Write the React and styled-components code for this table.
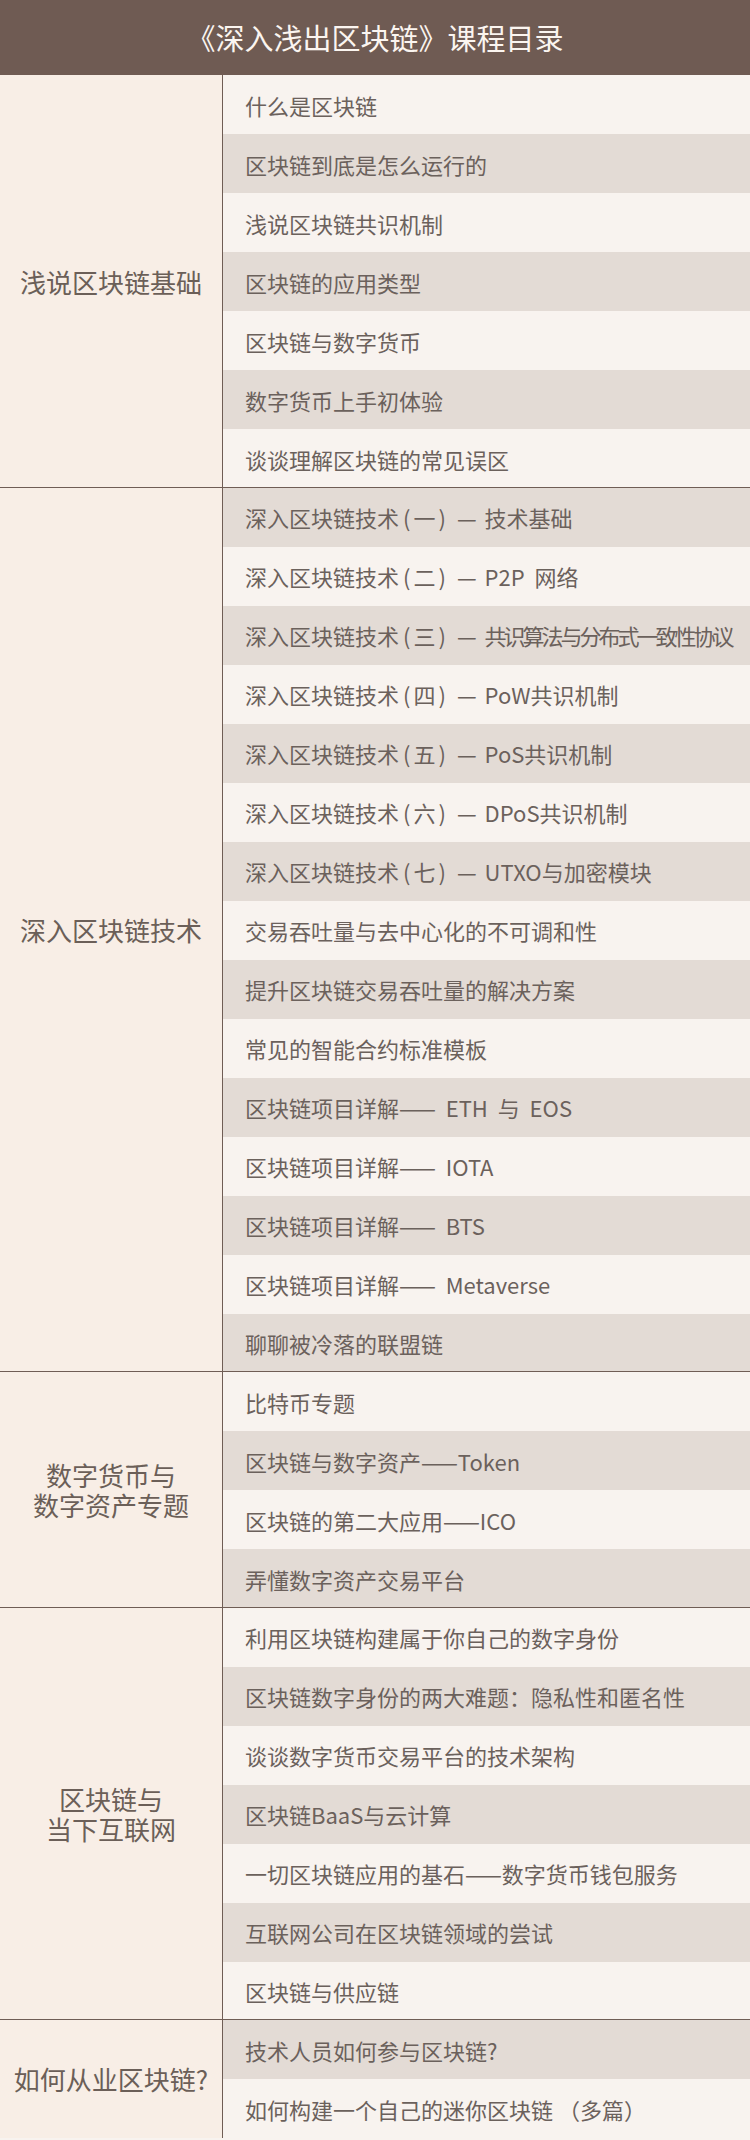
import React from "react";
import styled, { createGlobalStyle } from "styled-components";

const GlobalStyle = createGlobalStyle`
  html, body { margin: 0; padding: 0; background: #f8f3ef; }
  body { font-family: "Noto Sans CJK SC", "Noto Sans", sans-serif; }
  * { box-sizing: border-box; }
`;

const Page = styled.div`
  width: 750px;
  display: flex;
  flex-direction: column;
`;

const Header = styled.header`
  height: 75px;
  background: #6f5b53;
  color: #fbf5f0;
  font-size: 29px;
  display: flex;
  align-items: center;
  justify-content: center;
  padding-bottom: 2px;
`;

const Group = styled.section`
  display: grid;
  grid-template-columns: 223px 1fr;
  border-top: ${(p) => (p.$first ? "none" : "1.5px solid #6f5d55")};
  margin-top: ${(p) => (p.$first ? "0" : "-1.5px")};
  position: relative;
`;

const Label = styled.div`
  background: #f8eee6;
  border-right: 1.5px solid #6f5d55;
  color: #6b5f58;
  font-size: 26px;
  line-height: 30px;
  display: flex;
  align-items: center;
  justify-content: center;
  text-align: center;
  white-space: pre-line;
`;

const Items = styled.div`
  display: flex;
  flex-direction: column;
`;

const Item = styled.div`
  height: 59px;
  display: flex;
  align-items: center;
  padding-left: 22px;
  background: ${(p) => (p.$shaded ? "#e3dbd5" : "#f8f3ef")};
  color: #6b615c;
  font-size: 22px;
  white-space: pre;
  overflow: hidden;
`;

const Ord = styled.span`
  letter-spacing: 3px;
  margin: 0 8px 0 4px;
`;

const Dash = styled.span`
  margin-right: 8px;
`;

const Tail = styled.span`
  letter-spacing: ${(p) => (p.$tight ? "-3px" : "0")};
`;

const tech = (ord, tail, tight) => ({ ord, tail, tight });

const groups = [
  {
    label: "浅说区块链基础",
    items: [
      "什么是区块链",
      "区块链到底是怎么运行的",
      "浅说区块链共识机制",
      "区块链的应用类型",
      "区块链与数字货币",
      "数字货币上手初体验",
      "谈谈理解区块链的常见误区",
    ],
  },
  {
    label: "深入区块链技术",
    items: [
      tech("一", "技术基础"),
      tech("二", "P2P  网络"),
      tech("三", "共识算法与分布式一致性协议", true),
      tech("四", "PoW共识机制"),
      tech("五", "PoS共识机制"),
      tech("六", "DPoS共识机制"),
      tech("七", "UTXO与加密模块"),
      "交易吞吐量与去中心化的不可调和性",
      "提升区块链交易吞吐量的解决方案",
      "常见的智能合约标准模板",
      "区块链项目详解——  ETH  与  EOS",
      "区块链项目详解——  IOTA",
      "区块链项目详解——  BTS",
      "区块链项目详解——  Metaverse",
      "聊聊被冷落的联盟链",
    ],
  },
  {
    label: "数字货币与\n数字资产专题",
    items: [
      "比特币专题",
      "区块链与数字资产——Token",
      "区块链的第二大应用——ICO",
      "弄懂数字资产交易平台",
    ],
  },
  {
    label: "区块链与\n当下互联网",
    items: [
      "利用区块链构建属于你自己的数字身份",
      "区块链数字身份的两大难题：隐私性和匿名性",
      "谈谈数字货币交易平台的技术架构",
      "区块链BaaS与云计算",
      "一切区块链应用的基石——数字货币钱包服务",
      "互联网公司在区块链领域的尝试",
      "区块链与供应链",
    ],
  },
  {
    label: "如何从业区块链?",
    items: ["技术人员如何参与区块链?", "如何构建一个自己的迷你区块链 （多篇）"],
  },
];

export default function App() {
  let index = 0;
  return (
    <Page>
      <GlobalStyle />
      <Header>《深入浅出区块链》课程目录</Header>
      {groups.map((g, gi) => (
        <Group key={gi} $first={gi === 0}>
          <Label>{g.label}</Label>
          <Items>
            {g.items.map((t, ti) => {
              const shaded = index % 2 === 1;
              index += 1;
              if (typeof t === "string") {
                return (
                  <Item key={ti} $shaded={shaded}>
                    {t}
                  </Item>
                );
              }
              return (
                <Item key={ti} $shaded={shaded}>
                  <span>深入区块链技术</span>
                  <Ord>({t.ord})</Ord>
                  <Dash>—</Dash>
                  <Tail $tight={t.tight}>{t.tail}</Tail>
                </Item>
              );
            })}
          </Items>
        </Group>
      ))}
    </Page>
  );
}
